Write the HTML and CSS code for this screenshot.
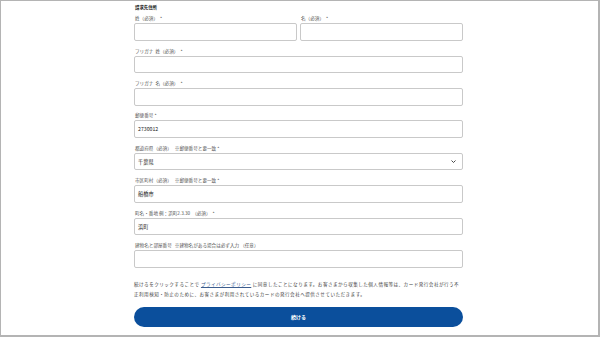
FILE: index.html
```html
<!DOCTYPE html>
<html lang="ja">
<head>
<meta charset="utf-8">
<link rel="stylesheet" href="styles.css">
</head>
<body>
<div class="frame">
  <form class="form">
    <h2 class="title">請求先住所</h2>
    <div class="fields">
      <div class="pair">
        <div class="field">
          <label class="label">姓（必須）&nbsp;&nbsp;*</label>
          <div class="input"></div>
        </div>
        <div class="field">
          <label class="label">名（必須）&nbsp;&nbsp;*</label>
          <div class="input"></div>
        </div>
      </div>
      <div class="field">
        <label class="label">フリガナ&nbsp;&nbsp;姓（必須）&nbsp;&nbsp;*</label>
        <div class="input"></div>
      </div>
      <div class="field">
        <label class="label">フリガナ&nbsp;&nbsp;名（必須）&nbsp;&nbsp;*</label>
        <div class="input"></div>
      </div>
      <div class="field">
        <label class="label">郵便番号 *</label>
        <div class="input">2730012</div>
      </div>
      <div class="field">
        <label class="label">都道府県（必須）&nbsp;&nbsp;&nbsp;※郵便番号と要一致 *</label>
        <div class="input select">千葉県
          <svg class="chev" viewBox="0 0 10 6" width="5" height="3"><path d="M1 1l4 4 4-4" fill="none" stroke="#333" stroke-width="1.8"/></svg>
        </div>
      </div>
      <div class="field">
        <label class="label">市区町村（必須）&nbsp;&nbsp;&nbsp;※郵便番号と要一致 *</label>
        <div class="input">船橋市</div>
      </div>
      <div class="field">
        <label class="label">町名・番地 例：浜町2.3.30&nbsp;&nbsp;（必須）&nbsp;&nbsp;*</label>
        <div class="input">浜町</div>
      </div>
      <div class="field">
        <label class="label">建物名と部屋番号&nbsp;&nbsp;&nbsp;※建物名がある場合は必ず入力&nbsp;（任意）</label>
        <div class="input"></div>
      </div>
    </div>
    <p class="note">続けるをクリックすることで <a class="link">プライバシーポリシー</a> に同意したことになります。お客さまから収集した個人情報等は、カード発行会社が行う不正利用検知・防止のために、お客さまが利用されているカードの発行会社へ提供させていただきます。</p>
    <div class="button">続ける</div>
  </form>
</div>
</body>
</html>
```

FILE: styles.css
```css
html, body {
  margin: 0;
  padding: 0;
  background: #fff;
}
body {
  font-family: "Noto Sans CJK JP", "Noto Sans", sans-serif;
  color: #333;
}
.frame {
  box-sizing: border-box;
  width: 600px;
  height: 337px;
  border-top: 1px solid #b4b4b4;
  border-left: 1px solid #b4b4b4;
  border-right: 2px solid #b4b4b4;
  border-bottom: 2px solid #b4b4b4;
  padding: 2px 0 0 133px;
}
.form {
  width: 329px;
}
.title {
  margin: 0 0 4.3px 1px;
  font-size: 4.4px;
  line-height: 8px;
  font-weight: 700;
  color: #111;
}
.fields {
  display: flex;
  flex-direction: column;
  gap: 6.9px;
}
.pair {
  display: grid;
  grid-template-columns: 1fr 1fr;
  gap: 3px;
}
.field {
  display: flex;
  flex-direction: column;
}
.label {
  font-size: 4.6px;
  line-height: 6px;
  height: 6px;
  margin: 0 0 2px 1px;
  color: #555;
  white-space: nowrap;
}
.input {
  box-sizing: border-box;
  height: 17.5px;
  border: 1px solid #c9c9c9;
  border-radius: 2px;
  padding: 0 3px;
  font-size: 5.2px;
  line-height: 15.5px;
  color: #222;
  display: flex;
  align-items: center;
}
.select {
  justify-content: space-between;
  padding-right: 6px;
}
.chev {
  display: block;
}
.note {
  margin: 12.7px 0 0 0;
  font-size: 4.6px;
  line-height: 9.5px;
  letter-spacing: 0.45px;
  color: #444;
}
.link {
  color: #3c5d8e;
  text-decoration: underline;
}
.button {
  margin-top: 8px;
  height: 19.5px;
  border-radius: 10px;
  background: #0b4f9c;
  color: #fff;
  font-size: 5px;
  font-weight: 700;
  display: flex;
  align-items: center;
  justify-content: center;
}
```
